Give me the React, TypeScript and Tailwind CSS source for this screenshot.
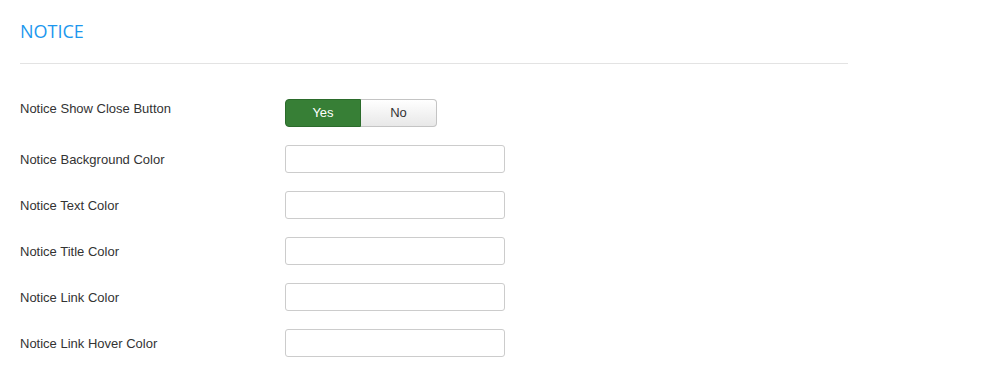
import React from "react";

const labels = [
  "Notice Background Color",
  "Notice Text Color",
  "Notice Title Color",
  "Notice Link Color",
  "Notice Link Hover Color",
];

export default function App() {
  return (
    <div
      className="w-[1000px] h-[376px] bg-white pl-[20px] text-[#333333]"
      style={{ fontFamily: '"Liberation Sans", Arial, sans-serif' }}
    >
      <div className="w-[828px]">
        <div className="pt-[20px] h-[63px]">
          <h2
            className="text-[18px] leading-[22px] text-[#1c97ee] font-normal"
            style={{ fontFamily: '"Open Sans", sans-serif' }}
          >
            NOTICE
          </h2>
        </div>
        <div className="h-px bg-[#e3e3e3]" />
      </div>

      <div className="pt-[35px]">
        <div className="flex items-start mb-[18px]">
          <div className="w-[265px] text-[13px] leading-[18px] mt-[1px]">
            Notice Show Close Button
          </div>
          <div className="flex h-[28px] text-[13px]">
            <button className="w-[76px] h-[28px] rounded-l-[4px] bg-[#377f36] border border-[#2b6b2b] text-white leading-[26px]">
              Yes
            </button>
            <button className="w-[76px] h-[28px] rounded-r-[4px] bg-gradient-to-b from-[#ffffff] to-[#e8e8e8] border border-[#c4c4c4] border-l-0 text-[#333333] leading-[26px]">
              No
            </button>
          </div>
        </div>

        {labels.map((l) => (
          <div key={l} className="flex items-start mb-[18px]">
            <div className="w-[265px] text-[13px] leading-[18px] pt-[6px]">{l}</div>
            <input
              type="text"
              className="w-[220px] h-[28px] border border-[#cccccc] rounded-[3px] bg-white outline-none"
            />
          </div>
        ))}
      </div>
    </div>
  );
}
